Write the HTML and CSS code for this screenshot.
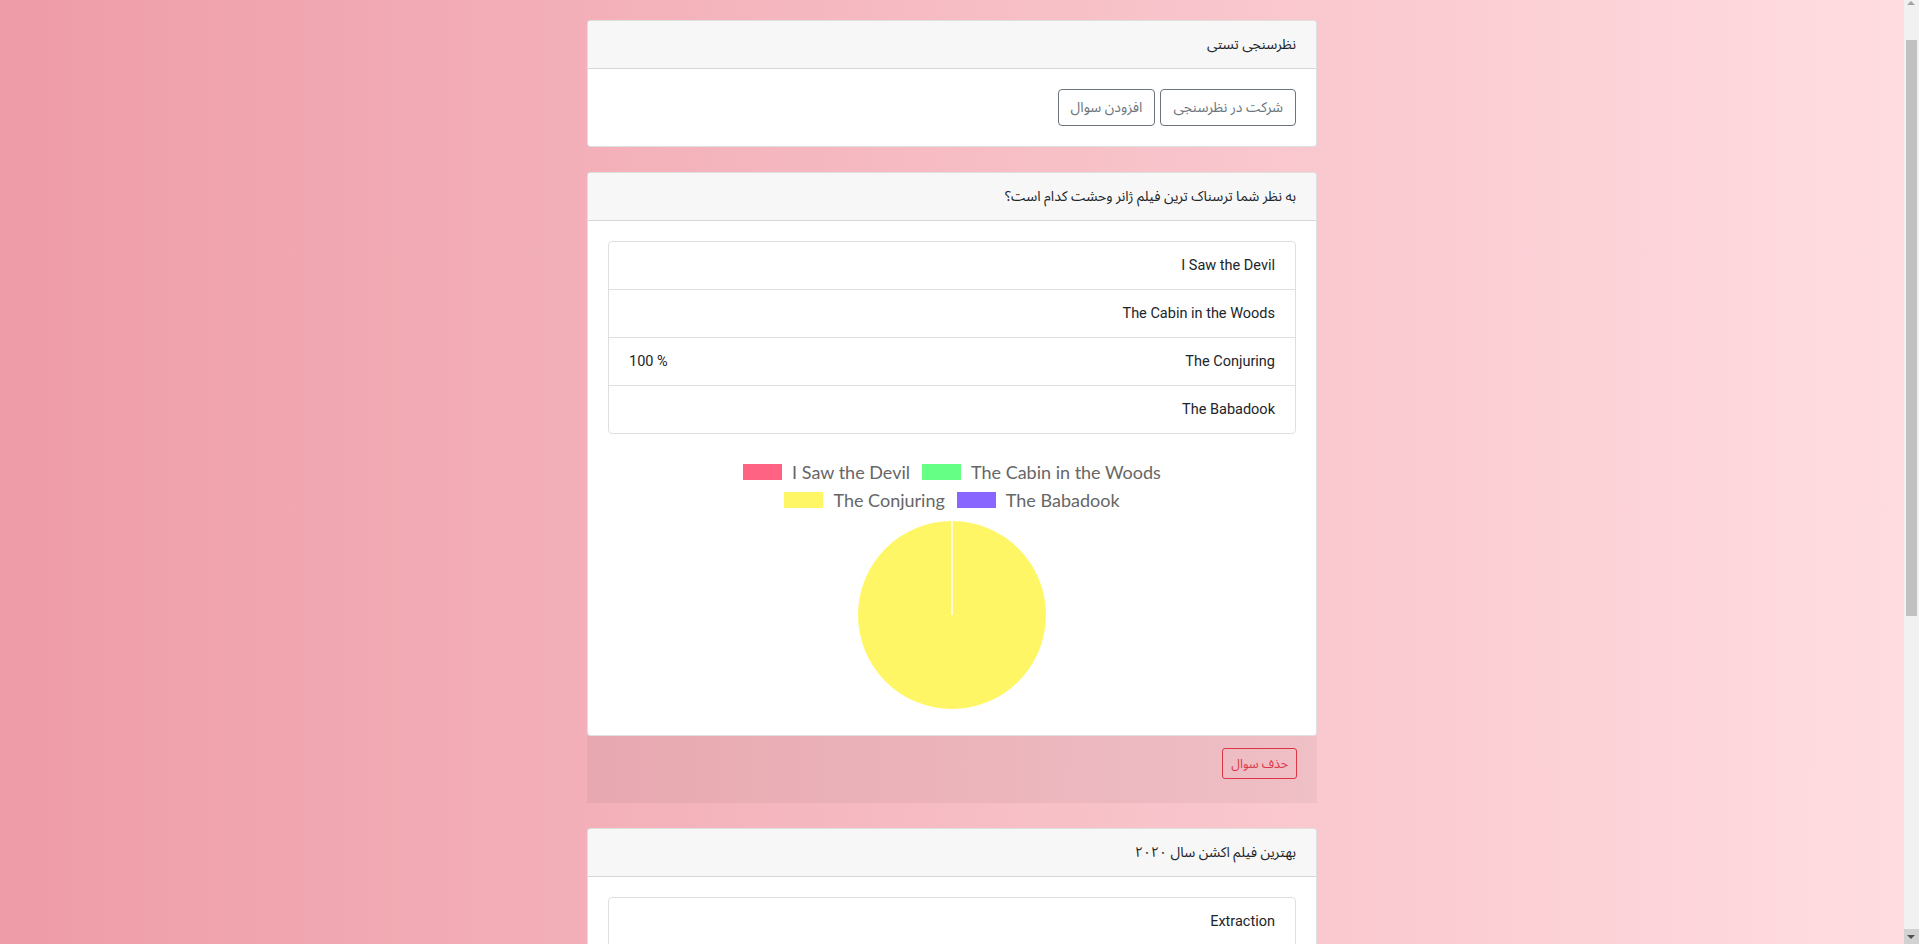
FILE: index.html
```html
<!DOCTYPE html>
<html lang="fa" dir="rtl">
<head>
<meta charset="utf-8">
<title>نظرسنجی تستی</title>
<link rel="stylesheet" href="styles.css">
</head>
<body>
<div class="page">
  <div class="card poll-card">
    <div class="card-header">نظرسنجی تستی</div>
    <div class="card-body actions">
      <button class="btn btn-outline">شرکت در نظرسنجی</button>
      <button class="btn btn-outline">افزودن سوال</button>
    </div>
  </div>

  <section class="question">
    <div class="card">
      <div class="card-header">به نظر شما ترسناک ترین فیلم ژانر وحشت کدام است؟</div>
      <div class="card-body">
        <ul class="options">
          <li class="option"><span>I Saw the Devil</span><span class="pct" dir="ltr"></span></li>
          <li class="option"><span>The Cabin in the Woods</span><span class="pct" dir="ltr"></span></li>
          <li class="option"><span>The Conjuring</span><span class="pct" dir="ltr">100 %</span></li>
          <li class="option"><span>The Babadook</span><span class="pct" dir="ltr"></span></li>
        </ul>
        <div class="chart">
          <div class="legend" dir="ltr">
            <div class="legend-row">
              <span class="legend-item"><i class="swatch sw-pink"></i>I Saw the Devil</span>
              <span class="legend-item"><i class="swatch sw-green"></i>The Cabin in the Woods</span>
            </div>
            <div class="legend-row">
              <span class="legend-item"><i class="swatch sw-yellow"></i>The Conjuring</span>
              <span class="legend-item"><i class="swatch sw-purple"></i>The Babadook</span>
            </div>
          </div>
          <svg class="pie" width="188" height="188" viewBox="0 0 188 188">
            <circle cx="94" cy="94" r="94" fill="#fff666"/>
            <line x1="94" y1="0" x2="94" y2="94" stroke="#ffffff" stroke-width="1.5"/>
          </svg>
        </div>
      </div>
    </div>
    <div class="q-footer"><button class="btn btn-sm btn-danger">حذف سوال</button></div>
  </section>

  <section class="question">
    <div class="card">
      <div class="card-header">بهترین فیلم اکشن سال ۲۰۲۰</div>
      <div class="card-body">
        <ul class="options">
          <li class="option"><span>Extraction</span><span class="pct" dir="ltr"></span></li>
          <li class="option"><span>Tenet</span><span class="pct" dir="ltr"></span></li>
          <li class="option"><span>Bad Boys for Life</span><span class="pct" dir="ltr">100 %</span></li>
          <li class="option"><span>The Old Guard</span><span class="pct" dir="ltr"></span></li>
        </ul>
        <div class="chart">
          <div class="legend" dir="ltr">
            <div class="legend-row">
              <span class="legend-item"><i class="swatch sw-pink"></i>Extraction</span>
              <span class="legend-item"><i class="swatch sw-green"></i>Tenet</span>
              <span class="legend-item"><i class="swatch sw-yellow"></i>Bad Boys for Life</span>
            </div>
            <div class="legend-row">
              <span class="legend-item"><i class="swatch sw-purple"></i>The Old Guard</span>
            </div>
          </div>
          <svg class="pie" width="188" height="188" viewBox="0 0 188 188">
            <circle cx="94" cy="94" r="94" fill="#fff666"/>
            <line x1="94" y1="0" x2="94" y2="94" stroke="#ffffff" stroke-width="1.5"/>
          </svg>
        </div>
      </div>
    </div>
    <div class="q-footer"><button class="btn btn-sm btn-danger">حذف سوال</button></div>
  </section>
</div>

<div class="scrollbar" aria-hidden="true">
  <span class="sb-arrow sb-up"></span>
  <span class="sb-thumb"></span>
  <span class="sb-down"><span class="sb-arrow sb-down-arrow"></span></span>
</div>
</body>
</html>
```

FILE: styles.css
```css
html {
  background: linear-gradient(to right, #ee9ca7, #ffdde1);
  min-height: 100%;
}

body {
  margin: 0 15px 0 0;
  font-family: Roboto, "Noto Sans Arabic", "DejaVu Sans", sans-serif;
  font-size: 15px;
  line-height: 23px;
  color: #212529;
}

.page {
  width: 730px;
  margin: 0 auto;
  padding: 20px 0 7px;
}

.card {
  background: #fff;
  border: 1px solid rgba(0, 0, 0, 0.125);
  border-radius: 4px;
}

.poll-card {
  margin-bottom: 25px;
}

.card-header {
  padding: 12px 20px;
  font-size: 14px;
  background: #f7f7f7;
  border-bottom: 1px solid rgba(0, 0, 0, 0.125);
  border-radius: 3px 3px 0 0;
}

.card-body {
  padding: 20px;
}

.actions {
  display: flex;
  gap: 5px;
}

.btn {
  display: inline-block;
  font-family: inherit;
  font-size: 14px;
  line-height: 23px;
  padding: 6px 12px;
  background: transparent;
  border: 1px solid #6c757d;
  border-radius: 4px;
  color: #6c757d;
  cursor: pointer;
}

.btn-sm {
  font-size: 12.5px;
  line-height: 21px;
  padding: 4px 8px;
  border-radius: 3px;
}

.btn-danger {
  border-color: #dc3545;
  color: #dc3545;
}

.options {
  list-style: none;
  margin: 0;
  padding: 0;
  border: 1px solid rgba(0, 0, 0, 0.125);
  border-radius: 4px;
}

.option {
  display: flex;
  justify-content: space-between;
  padding: 12px 20px;
  font-size: 14.5px;
}

.option + .option {
  border-top: 1px solid rgba(0, 0, 0, 0.125);
}

.chart {
  padding-top: 24px;
}

.legend-row {
  display: flex;
  justify-content: center;
  align-items: center;
  height: 28px;
}

.legend-item {
  display: flex;
  align-items: center;
  margin: 0 6px;
  font-family: Lato, "Liberation Sans", sans-serif;
  font-size: 18px;
  line-height: 1;
  color: #666;
}

.swatch {
  display: block;
  width: 39px;
  height: 16px;
  margin-right: 10px;
}

.sw-pink { background: #ff6384; }
.sw-green { background: #66ff85; }
.sw-yellow { background: #fff666; }
.sw-purple { background: #8866ff; }

.pie {
  display: block;
  margin: 7px auto 6px;
}

.question {
  margin-bottom: 25px;
}

.q-footer {
  display: flex;
  height: 67px;
  box-sizing: border-box;
  padding: 12px 20px;
  background: rgba(0, 0, 0, 0.045);
  align-items: flex-start;
}

/* classic browser scrollbar drawn over the right edge */
.scrollbar {
  position: fixed;
  top: 0;
  right: 0;
  width: 15px;
  height: 100vh;
  background: #f1f1f1;
}

.sb-thumb {
  position: absolute;
  top: 40px;
  left: 2px;
  width: 11px;
  height: 576px;
  background: #c1c1c1;
}

.sb-arrow {
  position: absolute;
  left: 3px;
  width: 0;
  height: 0;
  border-left: 4.5px solid transparent;
  border-right: 4.5px solid transparent;
}

.sb-up {
  top: 1px;
  border-bottom: 4px solid #a3a3a3;
}

.sb-down {
  position: absolute;
  left: 0;
  bottom: 0;
  width: 15px;
  height: 15px;
  background: #d2d2d2;
}

.sb-down-arrow {
  top: 6px;
  border-top: 4px solid #505050;
}
```
